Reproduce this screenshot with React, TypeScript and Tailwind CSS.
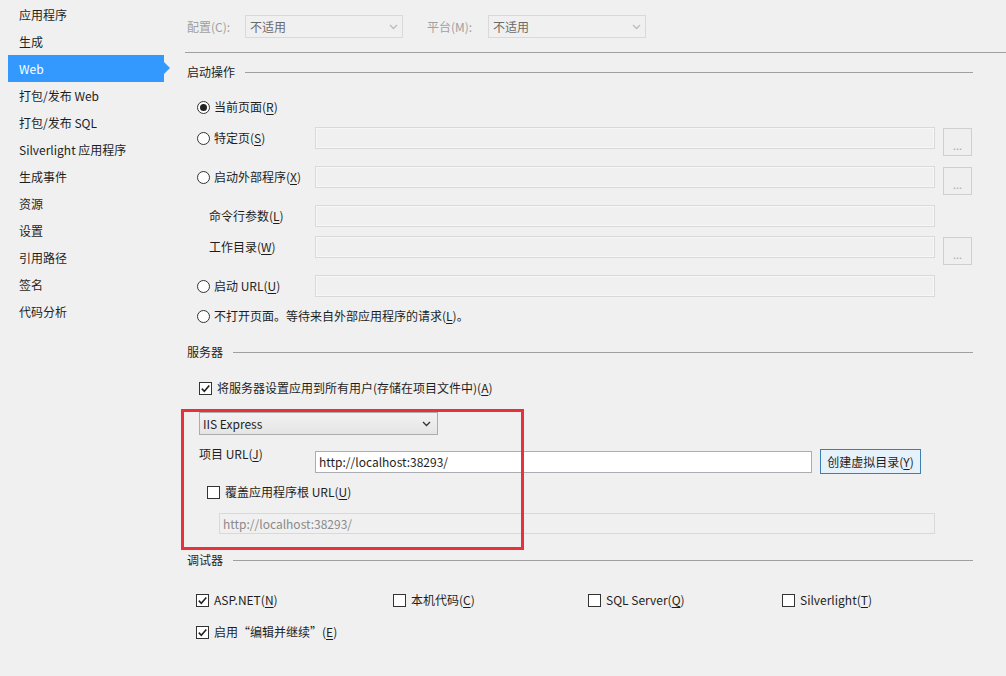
import type { ReactNode } from "react";

const font = "font-['Noto_Sans_CJK_SC','Noto_Sans',sans-serif]";

const navItems = [
  "应用程序",
  "生成",
  "Web",
  "打包/发布 Web",
  "打包/发布 SQL",
  "Silverlight 应用程序",
  "生成事件",
  "资源",
  "设置",
  "引用路径",
  "签名",
  "代码分析",
];

const Chevron = ({ color = "#555" }: { color?: string }) => (
  <svg width="9" height="6" viewBox="0 0 9 6" className="shrink-0">
    <path d="M1 1 L4.5 4.5 L8 1" fill="none" stroke={color} strokeWidth="1.3" />
  </svg>
);

const Mn = ({ k }: { k: string }) => <u className="underline-offset-2">{k}</u>;

const Radio = ({ checked, children }: { checked?: boolean; children: ReactNode }) => (
  <div className="flex items-center gap-[4px] leading-[16px]">
    <span className="w-[13px] h-[13px] rounded-full border border-[#333] bg-white flex items-center justify-center shrink-0">
      {checked && <span className="w-[7px] h-[7px] rounded-full bg-[#222]" />}
    </span>
    <span>{children}</span>
  </div>
);

const Check = ({ checked, children }: { checked?: boolean; children: ReactNode }) => (
  <div className="flex items-center gap-[5px] leading-[16px]">
    <span className="w-[13px] h-[13px] border border-[#333] bg-white flex items-center justify-center shrink-0">
      {checked && (
        <svg width="11" height="11" viewBox="0 0 11 11">
          <path d="M1.8 5.6 L4.3 8.2 L9.3 2.4" fill="none" stroke="#222" strokeWidth="1.6" />
        </svg>
      )}
    </span>
    <span>{children}</span>
  </div>
);

const GroupHeader = ({ title }: { title: string }) => (
  <div className="flex items-center h-[16px] pl-[2px] leading-[16px]">
    <span>{title}</span>
    <div className="flex-1 h-px bg-[#a0a0a0] ml-[10px]" />
  </div>
);

const DisabledBox = ({ className = "" }: { className?: string }) => (
  <div className={`h-[22px] border border-[#d9d9d9] bg-[#f0f0f0] shadow-[inset_0_0_0_1px_#f7f7f7] ${className}`} />
);

const DotsButton = () => (
  <div className="ml-[8px] mt-[1px] w-[29px] h-[28px] border border-[#cfcfcf] bg-[#efefef] flex items-end justify-center pb-[4px] text-[#a8a8a8] text-[11px] leading-[11px]">
    ...
  </div>
);

export default function App() {
  return (
    <div className={`relative flex w-full h-[676px] bg-[#f0f0f0] text-[12px] text-[#1e1e1e] ${font}`}>
      {/* left nav */}
      <div className="w-[185px] shrink-0 pt-[1px] pl-[8px]">
        {navItems.map((item) => (
          <div
            key={item}
            className={`relative w-[156px] h-[27px] flex items-center pl-[11px] leading-[16px] ${
              item === "Web" ? "bg-[#3399ff] text-white" : ""
            }`}
          >
            {item}
            {item === "Web" && (
              <span className="absolute right-[-6px] top-[7px] w-0 h-0 border-y-[6px] border-y-transparent border-l-[6px] border-l-[#3399ff]" />
            )}
          </div>
        ))}
      </div>

      {/* main */}
      <div className="flex-1 flex flex-col pr-[33px] pt-[15px]">
        {/* configuration row */}
        <div className="flex items-center h-[23px] pl-[2px]">
          <span className="text-[#a0a0a0] w-[58px]">配置(C):</span>
          <div className="w-[158px] h-[23px] border border-[#d9d9d9] flex items-center justify-between px-[4px] text-[#6a6a6a]">
            <span>不适用</span>
            <Chevron color="#bbb" />
          </div>
          <span className="text-[#a0a0a0] ml-[24px] w-[61px]">平台(M):</span>
          <div className="w-[158px] h-[23px] border border-[#d9d9d9] flex items-center justify-between px-[4px] text-[#6a6a6a]">
            <span>不适用</span>
            <Chevron color="#bbb" />
          </div>
        </div>
        <div className="mt-[14px] h-px bg-[#a0a0a0] -mr-[33px]" />

        {/* start action */}
        <div className="mt-[11px]">
          <GroupHeader title="启动操作" />
        </div>
        <div className="mt-[17px] h-[30px] pl-[12px]">
          <div className="h-[20px] flex items-center">
            <Radio checked>
              当前页面(<Mn k="R" />)
            </Radio>
          </div>
        </div>
        <div className="h-[39px] flex items-start">
          <div className="w-[130px] h-[22px] flex items-center pl-[12px]">
            <Radio>
              特定页(<Mn k="S" />)
            </Radio>
          </div>
          <DisabledBox className="w-[620px]" />
          <DotsButton />
        </div>
        <div className="h-[39px] flex items-start">
          <div className="w-[130px] h-[22px] flex items-center pl-[12px]">
            <Radio>
              启动外部程序(<Mn k="X" />)
            </Radio>
          </div>
          <DisabledBox className="w-[620px]" />
          <DotsButton />
        </div>
        <div className="h-[31px] flex items-start">
          <div className="w-[130px] h-[22px] flex items-center pl-[24px] leading-[16px]">
            命令行参数(<Mn k="L" />)
          </div>
          <DisabledBox className="w-[620px]" />
        </div>
        <div className="h-[39px] flex items-start">
          <div className="w-[130px] h-[22px] flex items-center pl-[24px] leading-[16px]">
            工作目录(<Mn k="W" />)
          </div>
          <DisabledBox className="w-[620px]" />
          <DotsButton />
        </div>
        <div className="h-[31px] flex items-start">
          <div className="w-[130px] h-[22px] flex items-center pl-[12px]">
            <Radio>
              启动 URL(<Mn k="U" />)
            </Radio>
          </div>
          <DisabledBox className="w-[620px]" />
        </div>
        <div className="h-[20px] flex items-center pl-[12px]">
          <Radio>
            不打开页面。等待来自外部应用程序的请求(<Mn k="L" />)。
          </Radio>
        </div>

        {/* server */}
        <div className="mt-[18px]">
          <GroupHeader title="服务器" />
        </div>
        <div className="mt-[18px] h-[20px] flex items-center pl-[14px]">
          <Check checked>
            将服务器设置应用到所有用户(存储在项目文件中)(<Mn k="A" />)
          </Check>
        </div>
        <div className="mt-[14px] pl-[14px]">
          <div className="w-[239px] h-[23px] border border-[#acacac] bg-gradient-to-b from-[#f2f2f2] to-[#e5e5e5] flex items-center justify-between pl-[3px] pr-[6px] leading-[16px]">
            <span>IIS Express</span>
            <Chevron color="#333" />
          </div>
        </div>
        <div className="mt-[11px] flex items-start">
          <div className="w-[130px] pl-[14px] h-[16px] leading-[16px]">
            项目 URL(<Mn k="J" />)
          </div>
          <div className="mt-[5px] w-[497px] h-[22px] border border-[#abadb3] bg-white flex items-center pl-[3px] leading-[16px]">
            http://localhost:38293/
          </div>
          <div className="ml-[8px] mt-[3px] w-[101px] h-[25px] border border-[#3c7fb1] bg-[#e5f1fb] flex items-center justify-center leading-[16px]">
            创建虚拟目录(<Mn k="Y" />)
          </div>
        </div>
        <div className="mt-[8px] h-[20px] flex items-center pl-[22px]">
          <Check>
            覆盖应用程序根 URL(<Mn k="U" />)
          </Check>
        </div>
        <div className="mt-[11px] pl-[34px]">
          <div className="w-[716px] h-[21px] border border-[#d9d9d9] bg-[#f0f0f0] flex items-center pl-[3px] text-[#8a8a8a] leading-[16px]">
            http://localhost:38293/
          </div>
        </div>

        {/* debugger */}
        <div className="mt-[18px]">
          <GroupHeader title="调试器" />
        </div>
        <div className="mt-[22px] h-[20px] flex items-center pl-[11px]">
          <div className="w-[197px]">
            <Check checked>
              ASP.NET(<Mn k="N" />)
            </Check>
          </div>
          <div className="w-[195px]">
            <Check>
              本机代码(<Mn k="C" />)
            </Check>
          </div>
          <div className="w-[194px]">
            <Check>
              SQL Server(<Mn k="Q" />)
            </Check>
          </div>
          <div>
            <Check>
              Silverlight(<Mn k="T" />)
            </Check>
          </div>
        </div>
        <div className="mt-[12px] h-[20px] flex items-center pl-[11px]">
          <Check checked>
            启用“编辑并继续”(<Mn k="E" />)
          </Check>
        </div>
      </div>

      {/* red annotation box */}
      <div className="absolute left-[181px] top-[409px] w-[343px] h-[141px] border-[3px] border-[#e8313a] pointer-events-none" />
    </div>
  );
}
